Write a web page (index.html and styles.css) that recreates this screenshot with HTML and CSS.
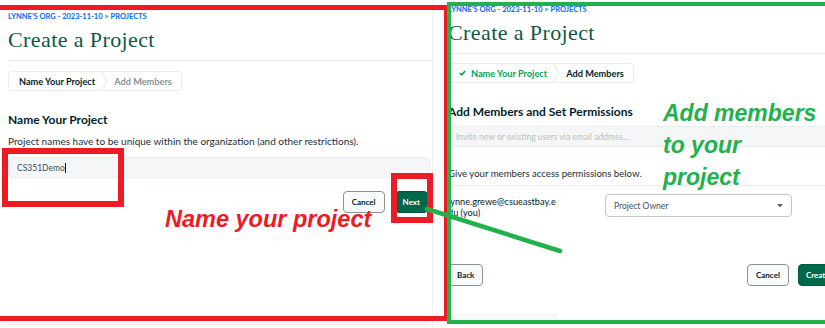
FILE: index.html
```html
<!DOCTYPE html>
<html lang="en">
<head>
  <meta charset="UTF-8" />
  <meta name="viewport" content="width=device-width, initial-scale=1.0"/>
  <title>Create a Project</title>
  <link rel="stylesheet" href="styles.css">
</head>
<body>
  <div class="canvas">

    <!-- step 1 screenshot -->
    <section class="shot shot-left">
      <div class="crumbs">LYNNE'S ORG - 2023-11-10 &gt; PROJECTS</div>
      <h1 class="title">Create a Project</h1>

      <div class="stepper">
        <span class="step step-active">Name Your Project</span>
        <svg class="step-sep" width="7" height="18" viewBox="0 0 7 18"><polyline points="0.5,0 6,9 0.5,18" fill="none" stroke="#e1e6e5" stroke-width="1"/></svg>
        <span class="step step-todo">Add Members</span>
      </div>

      <h2 class="section-title">Name Your Project</h2>
      <p class="hint">Project names have to be unique within the organization (and other restrictions).</p>

      <div class="field">
        <span class="field-value">CS351Demo</span><span class="text-caret"></span>
      </div>

      <div class="actions actions-end">
        <button class="btn btn-default">Cancel</button>
        <button class="btn btn-primary">Next</button>
      </div>

      <div class="foot-line"></div>
    </section>

    <!-- step 2 screenshot -->
    <section class="shot shot-right">
      <div class="crumbs">LYNNE'S ORG - 2023-11-10 &gt; PROJECTS</div>
      <h1 class="title">Create a Project</h1>

      <div class="stepper">
        <span class="step step-done">
          <svg class="check" width="7" height="6" viewBox="0 0 7 6"><polyline points="0.8,3 2.7,4.9 6.2,1" fill="none" stroke="#00a35c" stroke-width="1.6"/></svg>
          Name Your Project
        </span>
        <svg class="step-sep" width="7" height="18" viewBox="0 0 7 18"><polyline points="0.5,0 6,9 0.5,18" fill="none" stroke="#e1e6e5" stroke-width="1"/></svg>
        <span class="step step-active">Add Members</span>
      </div>

      <h2 class="section-title">Add Members and Set Permissions</h2>
      <div class="invite">Invite new or existing users via email address...</div>

      <p class="hint hint-rule">Give your members access permissions below.</p>

      <div class="member">
        <div class="member-email">lynne.grewe@csueastbay.e<br>du (you)</div>
        <div class="select">
          <span>Project Owner</span>
          <svg width="6" height="4" viewBox="0 0 6 4"><polygon points="0,0 6,0 3,3.5" fill="#5c6c75"/></svg>
        </div>
      </div>

      <div class="actions actions-split">
        <button class="btn btn-default">Back</button>
        <div class="actions-group">
          <button class="btn btn-default">Cancel</button>
          <button class="btn btn-primary">Create Project</button>
        </div>
      </div>

      <div class="foot-block"></div>
    </section>

    <!-- annotations drawn over the screenshots -->
    <div class="mark mark-red mark-red-page"></div>
    <div class="mark mark-red mark-red-field"></div>
    <div class="mark mark-red mark-red-next"></div>
    <div class="mark mark-green mark-green-page"></div>

    <svg class="arrow" width="825" height="328" viewBox="0 0 825 328">
      <line x1="427" y1="209" x2="560" y2="251" stroke="#22b14c" stroke-width="4.5" stroke-linecap="round"/>
    </svg>

    <div class="note note-red">Name your project</div>
    <div class="note note-green">Add members<br>to your<br>project</div>
  </div>
</body>
</html>
```

FILE: styles.css
```css
* {
  box-sizing: border-box;
}

body {
  margin: 0;
  background: #fff;
  font-family: Lato, "Open Sans", sans-serif;
  color: #001e2b;
}

.canvas {
  position: relative;
  display: flex;
  width: 825px;
  height: 328px;
  overflow: hidden;
  background: #fff;
}

.shot {
  display: flex;
  flex-direction: column;
  flex: none;
  height: 328px;
}

.shot-left {
  width: 433px;
  padding: 12px 2px 0 8px;
  border-right: 1px solid #f0f2f2;
}

.shot-right {
  width: 417px;
  margin-left: 15px;
  padding-top: 5px;
}

.crumbs {
  font-size: 7.5px;
  line-height: 10px;
  font-weight: 700;
  color: #016bf8;
}

.title {
  margin: 4px 0 0;
  padding-bottom: 6px;
  border-bottom: 1px solid #e8edeb;
  font-family: "Liberation Serif", serif;
  font-weight: 400;
  font-size: 22px;
  line-height: 28px;
  letter-spacing: 0.4px;
  color: #0b5a45;
}

.shot-left .title {
  margin-right: -2px;
}

/* stepper */
.stepper {
  display: flex;
  align-self: flex-start;
  align-items: center;
  height: 20px;
  margin-top: 10px;
  padding: 0 9px 0 10px;
  border: 1px solid #e8edeb;
  border-radius: 3px;
  font-size: 9.2px;
  font-weight: 700;
}

.shot-right .stepper {
  margin-top: 9px;
}

.step-sep {
  margin: 0 6px;
}

.step-active {
  color: #001e2b;
}

.step-todo {
  color: #889397;
}

.step-done {
  display: flex;
  align-items: center;
  gap: 5px;
  color: #00a35c;
}

/* content */
.section-title {
  margin: 22px 0 0;
  font-size: 12px;
  line-height: 14px;
  font-weight: 700;
}

.hint {
  margin: 8px 0 0;
  font-size: 10px;
  line-height: 13px;
  color: #1c2d38;
}

.field {
  display: flex;
  align-items: center;
  height: 21px;
  margin-top: 9px;
  padding: 0 8px;
  background: #f5f6f7;
  border: 1px solid #e8edeb;
  border-radius: 4px;
  font-size: 8.5px;
  color: #3d4f58;
}

.text-caret {
  width: 1px;
  height: 10px;
  background: #001e2b;
}

.invite {
  display: flex;
  align-items: center;
  height: 21px;
  margin: 7px 0 0 -2px;
  padding-left: 10px;
  background: #f5f6f7;
  border-top: 1px solid #e8edeb;
  border-bottom: 1px solid #e8edeb;
  font-size: 8.5px;
  color: #b8c4c2;
}

.hint-rule {
  margin: 20px 0 0 -2px;
  padding: 0 0 5px 2px;
  border-bottom: 1px solid #e8edeb;
  font-size: 9.6px;
}

.member {
  display: flex;
  align-items: flex-start;
  margin-top: 8px;
}

.member-email {
  width: 105px;
  margin-top: 2px;
  font-size: 9.2px;
  line-height: 11px;
  white-space: nowrap;
}

.select {
  display: flex;
  align-items: center;
  justify-content: space-between;
  width: 187px;
  height: 23px;
  margin-left: 52px;
  padding: 0 8px;
  border: 1px solid #c1c7c6;
  border-radius: 4px;
  font-size: 8.5px;
  color: #3d4f58;
}

/* buttons */
.actions {
  display: flex;
  gap: 10px;
  margin-top: 13px;
}

.actions-end {
  justify-content: flex-end;
  padding-right: 2px;
}

.actions-split {
  justify-content: space-between;
  margin-top: 46px;
}

.actions-group {
  display: flex;
  gap: 9px;
}

.btn {
  height: 22px;
  padding: 0 8px;
  border-radius: 4px;
  font-family: Lato, "Open Sans", sans-serif;
  font-size: 8px;
  font-weight: 700;
  white-space: nowrap;
  cursor: pointer;
}

.btn-default {
  background: #f9fbfa;
  border: 1px solid #889397;
  color: #001e2b;
}

.btn-primary {
  padding: 0 7px;
  background: #00684a;
  border: 1px solid #00593f;
  color: #fff;
}

.foot-line {
  height: 2px;
  margin: auto 0 3px;
  background: #f1f3f3;
}

.foot-block {
  width: 107px;
  height: 7px;
  margin: auto 0 8px 2px;
  background: #f7f8f8;
}

/* annotations */
.mark {
  position: absolute;
}

.mark-red {
  border: 5px solid #ed1c24;
}

.mark-green {
  border: 4px solid #22b14c;
}

.mark-red-page {
  left: -10px;
  top: 5px;
  width: 459px;
  height: 316px;
}

.mark-red-field {
  left: 2px;
  top: 148px;
  width: 122px;
  height: 59px;
  border-width: 6px;
}

.mark-red-next {
  left: 391px;
  top: 173px;
  width: 42px;
  height: 50px;
  border-width: 6px;
}

.mark-green-page {
  left: 447px;
  top: 2px;
  width: 420px;
  height: 322px;
}

.arrow {
  position: absolute;
  left: 0;
  top: 0;
}

.note {
  position: absolute;
  font-family: "Liberation Sans", Arial, sans-serif;
  font-size: 23.5px;
  font-weight: 700;
  font-style: italic;
}

.note-red {
  left: 165px;
  top: 208px;
  line-height: 23px;
  color: #ed1c24;
}

.note-green {
  left: 663px;
  top: 97px;
  line-height: 32px;
  font-size: 23px;
  color: #22b14c;
}
```
